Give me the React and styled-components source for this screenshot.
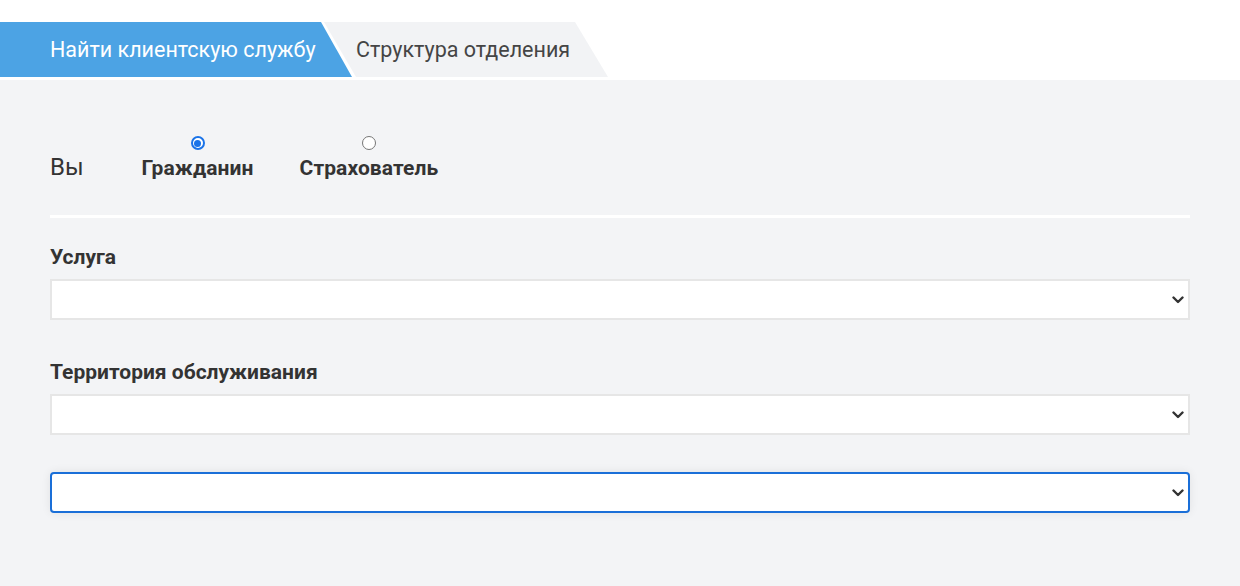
import React, { useState } from "react";
import styled, { createGlobalStyle } from "styled-components";

const GlobalStyle = createGlobalStyle`
  html, body {
    margin: 0;
    padding: 0;
    background: #fff;
    font-family: Roboto, "Liberation Sans", sans-serif;
  }
`;

const Page = styled.div`
  width: 1240px;
  height: 586px;
  padding-top: 22px;
  box-sizing: border-box;
  display: flex;
  flex-direction: column;
`;

const TabBar = styled.div`
  display: flex;
  height: 55px;
  margin-bottom: 3px;
`;

/* white edge along the slant of the active tab */
const ActiveEdge = styled.div`
  position: relative;
  z-index: 2;
  width: 356px;
  height: 100%;
  background: #fff;
  clip-path: polygon(0 0, 324px 0, 356px 100%, 0 100%);
`;

const ActiveTab = styled.div`
  width: 352px;
  height: 100%;
  background: #4ca3e4;
  clip-path: polygon(0 0, 321px 0, 352px 100%, 0 100%);
  display: flex;
  align-items: center;
  padding-left: 50px;
  box-sizing: border-box;
  color: #fff;
  font-size: 21.5px;
  white-space: nowrap;
`;

const Tab = styled.div`
  margin-left: -36px;
  width: 288px;
  height: 100%;
  background: #f2f3f5;
  clip-path: polygon(0 0, 255px 0, 288px 100%, 0 100%);
  display: flex;
  align-items: center;
  padding-left: 36px;
  box-sizing: border-box;
  color: #454545;
  font-size: 21.5px;
  white-space: nowrap;
`;

const Panel = styled.div`
  flex: 1;
  background: #f3f4f6;
  padding: 56px 50px 0;
`;

const WhoRow = styled.div`
  display: flex;
  align-items: flex-end;
  padding-bottom: 34px;
  border-bottom: 3px solid #fff;
`;

const WhoLabel = styled.span`
  font-size: 24px;
  color: #333;
  margin-right: 58px;
  line-height: 28px;
`;

const Option = styled.label`
  display: flex;
  flex-direction: column;
  align-items: center;
  gap: 5px;
  margin-right: 46px;
  cursor: pointer;
`;

const Radio = styled.span`
  width: 14px;
  height: 14px;
  border-radius: 50%;
  box-sizing: border-box;
  border: ${(p) => (p.checked ? "2px solid #1a73e8" : "1px solid #767676")};
  background: #fff;
  position: relative;

  &::after {
    content: "";
    display: ${(p) => (p.checked ? "block" : "none")};
    position: absolute;
    inset: 1.5px;
    border-radius: 50%;
    background: #1a73e8;
  }
`;

const OptionText = styled.span`
  font-size: 21px;
  font-weight: 700;
  color: #333;
  line-height: 26px;
  letter-spacing: 0.1px;
`;

const Field = styled.div`
  margin-top: ${(p) => p.top || 0}px;
`;

const Label = styled.div`
  font-size: 21px;
  font-weight: 700;
  color: #333;
  line-height: 24px;
  margin-bottom: 10px;
`;

const Select = styled.div`
  height: 41px;
  box-sizing: border-box;
  background: #fff;
  border: 2px solid ${(p) => (p.focused ? "#1a6fd8" : "#e6e6e6")};
  border-radius: ${(p) => (p.focused ? "4px" : "0")};
  box-shadow: ${(p) => (p.focused ? "0 0 10px rgba(0,0,0,0.08)" : "none")};
  display: flex;
  align-items: center;
  justify-content: flex-end;
  padding-right: 4px;
`;

const Chevron = () => (
  <svg width="12" height="8" viewBox="0 0 12 8">
    <path d="M1.5 1.5 L6 6 L10.5 1.5" fill="none" stroke="#333" strokeWidth="2.4" strokeLinecap="round" strokeLinejoin="round" />
  </svg>
);

export default function App() {
  const [who, setWho] = useState("citizen");

  return (
    <>
      <GlobalStyle />
      <Page>
        <TabBar>
          <ActiveEdge>
            <ActiveTab>Найти клиентскую службу</ActiveTab>
          </ActiveEdge>
          <Tab>Структура отделения</Tab>
        </TabBar>

        <Panel>
          <WhoRow>
            <WhoLabel>Вы</WhoLabel>
            <Option onClick={() => setWho("citizen")}>
              <Radio checked={who === "citizen"} />
              <OptionText>Гражданин</OptionText>
            </Option>
            <Option onClick={() => setWho("insurer")}>
              <Radio checked={who === "insurer"} />
              <OptionText>Страхователь</OptionText>
            </Option>
          </WhoRow>

          <Field top={27}>
            <Label>Услуга</Label>
            <Select><Chevron /></Select>
          </Field>

          <Field top={40}>
            <Label>Территория обслуживания</Label>
            <Select><Chevron /></Select>
          </Field>

          <Field top={37}>
            <Select focused><Chevron /></Select>
          </Field>
        </Panel>
      </Page>
    </>
  );
}
